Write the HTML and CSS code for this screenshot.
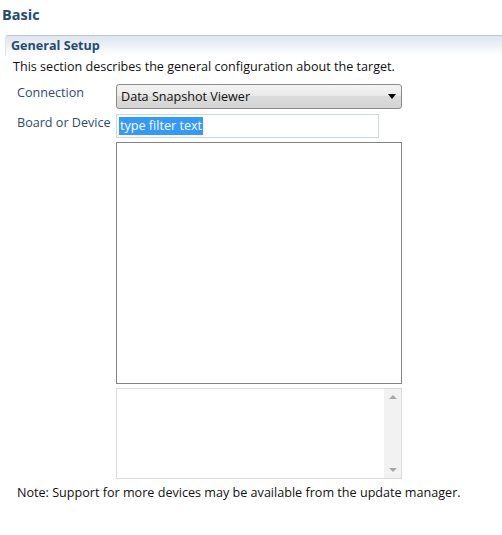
FILE: index.html
```html
<!DOCTYPE html>
<html>
<head>
<meta charset="utf-8">
<link rel="stylesheet" href="styles.css">
</head>
<body>
<div class="page">
  <h1 class="title">Basic</h1>
  <div class="section">
    <div class="section-head">General Setup</div>
    <p class="desc">This section describes the general configuration about the target.</p>
    <div class="form">
      <div class="label">Connection</div>
      <div class="combo"><span class="combo-text">Data Snapshot Viewer</span><span class="combo-arrow"></span></div>
      <div class="label">Board or Device</div>
      <div class="field"><span class="sel">type filter text</span></div>
      <div></div>
      <div class="list"></div>
      <div></div>
      <div class="info">
        <div class="info-body"></div>
        <div class="scrollbar"><span class="arr up"></span><span class="arr down"></span></div>
      </div>
    </div>
    <p class="note">Note: Support for more devices may be available from the update manager.</p>
  </div>
</div>
</body>
</html>
```
FILE: styles.css
```css
html, body { margin: 0; padding: 0; background: #fff; }
body { font-family: "Open Sans", "Noto Sans", sans-serif; font-size: 12.6px; color: #111; }
.page { width: 502px; height: 535px; overflow: hidden; }
.title { margin: 0; padding: 5px 0 0 2px; height: 35px; box-sizing: border-box; font-size: 14.5px; font-weight: bold; color: #244c73; line-height: 20px; }
.section { margin-left: 5px; }
.section-head {
  height: 21px; box-sizing: border-box;
  border-top: 1px solid #b9c8d2; border-left: 1px solid #dde5ec;
  border-top-left-radius: 3px;
  background: linear-gradient(#dde5ee, #ffffff);
  padding-left: 5px; font-weight: bold; color: #244c73; line-height: 20px;
}
.desc { margin: 0; padding: 3px 0 0 8px; height: 28px; box-sizing: border-box; line-height: 16px; }
.form { display: grid; grid-template-columns: 99px 286px; row-gap: 4px; padding-left: 12px; }
.label { color: #2d4d73; line-height: 16px; padding-top: 1px; }
.combo {
  height: 25px; margin-bottom: 1px; box-sizing: border-box; border: 1px solid #8a8a8a; border-radius: 3px;
  background: linear-gradient(#f3f3f3 0%, #ebebeb 45%, #dcdcdc 50%, #d4d4d4 100%);
  display: flex; align-items: center; justify-content: space-between; padding: 0 5px 0 4px;
}
.combo-text { line-height: 16px; }
.combo-arrow { width: 0; height: 0; border-left: 4px solid transparent; border-right: 4px solid transparent; border-top: 5px solid #000; }
.field {
  width: 263px; height: 24px; box-sizing: border-box; border: 1px solid #c9d8e2;
  padding: 2px 0 0 2px;
}
.sel { background: #3399ff; color: #fff; line-height: 18px; display: inline-block; padding: 0 1px; }
.list { height: 242px; box-sizing: border-box; border: 1px solid #848484; }
.info { height: 91px; box-sizing: border-box; border: 1px solid #dadada; display: flex; }
.info-body { flex: 1; }
.scrollbar { width: 17px; background: #f2f2f2; display: flex; flex-direction: column; justify-content: space-between; align-items: center; padding: 6px 0; }
.arr { width: 0; height: 0; border-left: 4px solid transparent; border-right: 4px solid transparent; }
.arr.up { border-bottom: 4px solid #a8a8a8; }
.arr.down { border-top: 4px solid #a8a8a8; }
.note { margin: 0; padding: 6px 0 0 12px; line-height: 16px; }
```
